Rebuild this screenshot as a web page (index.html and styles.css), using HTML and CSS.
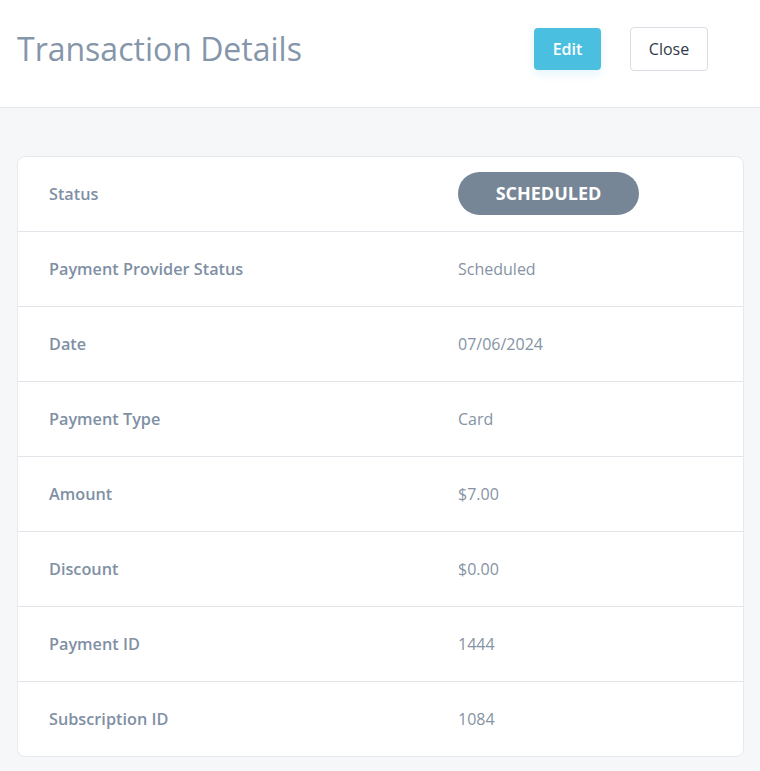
FILE: index.html
```
<!DOCTYPE html>
<html lang="en">
<head>
    <meta charset="UTF-8">
    <meta name="viewport" content="width=device-width, initial-scale=1.0">
    <title>Transaction Details</title>
    <link rel="stylesheet" href="styles.css">
</head>
<body>
    <header class="page-header">
        <h1>Transaction Details</h1>
        <div class="actions">
            <button class="btn btn-edit">Edit</button>
            <button class="btn btn-close">Close</button>
        </div>
    </header>

    <main class="content">
        <div class="card">
            <div class="row">
                <div class="label">Status</div>
                <div class="value"><span class="pill">SCHEDULED</span></div>
            </div>
            <div class="row">
                <div class="label">Payment Provider Status</div>
                <div class="value">Scheduled</div>
            </div>
            <div class="row">
                <div class="label">Date</div>
                <div class="value">07/06/2024</div>
            </div>
            <div class="row">
                <div class="label">Payment Type</div>
                <div class="value">Card</div>
            </div>
            <div class="row">
                <div class="label">Amount</div>
                <div class="value">$7.00</div>
            </div>
            <div class="row">
                <div class="label">Discount</div>
                <div class="value">$0.00</div>
            </div>
            <div class="row">
                <div class="label">Payment ID</div>
                <div class="value">1444</div>
            </div>
            <div class="row">
                <div class="label">Subscription ID</div>
                <div class="value">1084</div>
            </div>
        </div>
    </main>
</body>
</html>
```

FILE: styles.css
```
body {
    margin: 0;
    background-color: #f5f7f9;
    font-family: "Open Sans", "Noto Sans", sans-serif;
    color: #8494a7;
}

.page-header {
    height: 108px;
    background-color: #fff;
    border-bottom: 1px solid #e6e9ee;
    display: flex;
    align-items: center;
    padding: 0 52px 0 17px;
    box-sizing: border-box;
}

.page-header h1 {
    margin: 0 0 10px 0;
    font-size: 32px;
    font-weight: 400;
    color: #8696aa;
    flex: 1;
}

.actions {
    display: flex;
    align-items: center;
    gap: 29px;
    margin-bottom: 10px;
}

.btn {
    font-family: inherit;
    font-size: 16px;
    border-radius: 4px;
    cursor: pointer;
}

.btn-edit {
    width: 67px;
    height: 42px;
    border: none;
    background-color: #4bbfe0;
    color: #fff;
    font-weight: 600;
    box-shadow: 0 4px 10px rgba(75, 191, 224, 0.15);
}

.btn-close {
    width: 78px;
    height: 44px;
    border: 1px solid #d9dee4;
    background-color: #fff;
    color: #2f3b4c;
}

.content {
    padding: 48px 16px 15px 17px;
}

.card {
    background-color: #fff;
    border: 1px solid #e6e9ee;
    border-radius: 8px;
}

.row {
    display: flex;
    align-items: center;
    height: 74px;
    padding: 0 31px;
    border-bottom: 1px solid #e1e5ea;
}

.row:last-child {
    border-bottom: none;
}

.label {
    width: 409px;
    font-size: 16.25px;
    font-weight: 600;
    color: #8090a4;
}

.value {
    font-size: 16px;
    color: #8593a4;
}

.pill {
    display: inline-block;
    width: 181px;
    height: 43px;
    line-height: 43px;
    margin-top: -2px;
    border-radius: 22px;
    background-color: #768696;
    color: #fff;
    font-size: 18px;
    font-weight: 700;
    text-align: center;
}
```
